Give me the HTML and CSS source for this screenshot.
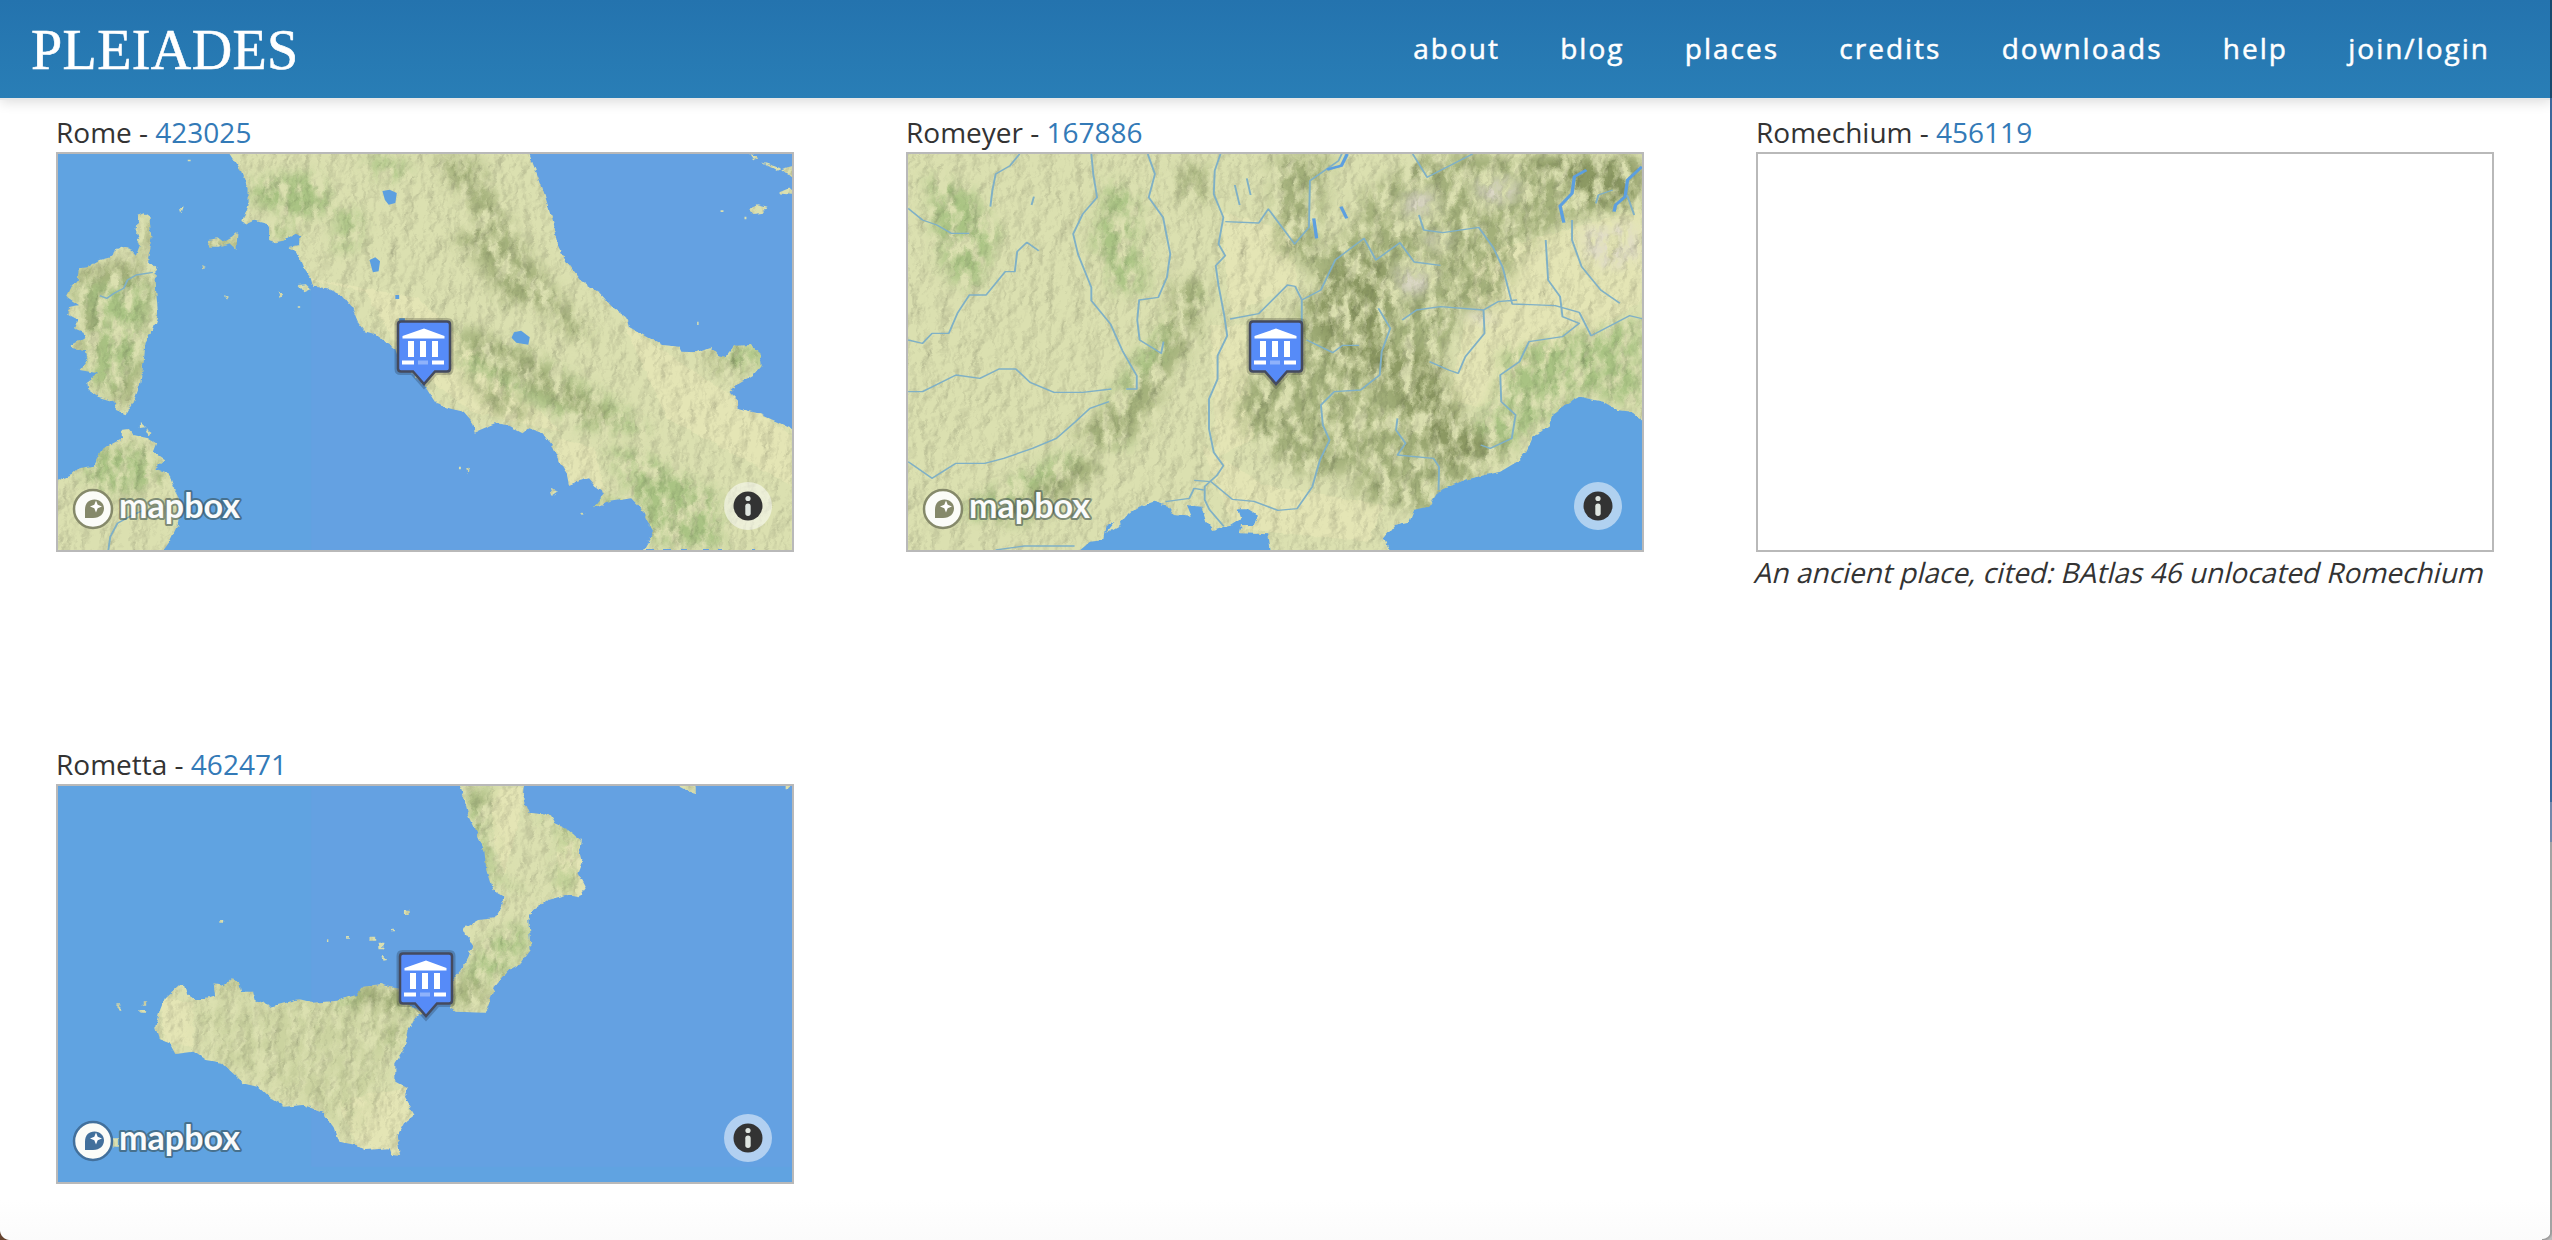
FILE: index.html
```html
<!DOCTYPE html>
<html lang="en">
<head>
<meta charset="utf-8">
<title>Pleiades</title>
<link rel="stylesheet" href="styles.css">
</head>
<body>
<svg class="defs" width="0" height="0" aria-hidden="true">
  <defs>
    <filter id="relief" x="0" y="0" width="100%" height="100%" color-interpolation-filters="sRGB">
      <feTurbulence type="fractalNoise" baseFrequency="0.032 0.016" numOctaves="5" seed="4" result="n"/>
      <feColorMatrix in="n" type="matrix" values="0 0 0 0 0  0 0 0 0 0  0 0 0 0 0  1 0 0 0 0" result="h"/>
      <feDiffuseLighting in="h" surfaceScale="2.4" diffuseConstant="1.18" lighting-color="#fff" result="lit"><feDistantLight azimuth="215" elevation="58"/></feDiffuseLighting>
      <feBlend in="SourceGraphic" in2="lit" mode="multiply" result="b"/>
      <feComposite in="b" in2="SourceGraphic" operator="in"/>
    </filter>
    <filter id="ridge" x="-20%" y="-20%" width="140%" height="140%" color-interpolation-filters="sRGB">
      <feGaussianBlur in="SourceGraphic" stdDeviation="18" result="soft"/>
      <feTurbulence type="fractalNoise" baseFrequency="0.04 0.015" numOctaves="5" seed="9" result="n"/>
      <feColorMatrix in="n" type="matrix" values="0 0 0 0 0  0 0 0 0 0  0 0 0 0 0  3 0 0 0 -0.9" result="m"/>
      <feComposite in="soft" in2="m" operator="in"/>
    </filter>
    <filter id="rough" x="-2%" y="-2%" width="104%" height="104%">
      <feTurbulence type="fractalNoise" baseFrequency="0.05" numOctaves="3" seed="2" result="n"/>
      <feDisplacementMap in="SourceGraphic" in2="n" scale="12" xChannelSelector="R" yChannelSelector="G"/>
    </filter>
    <symbol id="pin" viewBox="0 0 60 74">
      <path d="M6.500 5h47q3 0 3 3v45q0 3-3 3H41.500L30 69 18.500 56H6.500q-3 0-3-3V8q0-3 3-3z" class="pin-halo"/>
      <path d="M7 5.500h46q3 0 3 3v44q0 3-3 3H41L30 68 19 55.500H7q-3 0-3-3v-44q0-3 3-3z" class="pin-body"/>
      <path d="M8.500 22.500V20L30 12.500 50.500 20v2.500zM14 25h6v16h-6zm12 0h6v16h-6zm12 0h6v16h-6zM8 44.500h12v4H8zm30 0h12v4H38z" class="pin-glyph"/>
      <path d="M24 44.500h10v4H24z" class="pin-step"/>
    </symbol>
    <symbol id="logo" viewBox="0 0 176 48">
      <circle cx="21" cy="23" r="19" class="logo-disc"/>
      <path d="M13 32V23.500C13 17 17 13.500 22.500 13.500S32 17.500 32 22.500 28 32 21 32z" class="logo-drop"/>
      <path d="M24 14.500l1.700 4.300 4.300 1.700-4.300 1.700-1.700 4.300-1.700-4.300-4.300-1.700 4.300-1.700z" class="logo-star"/>
      <text x="47" y="32" textLength="121" lengthAdjust="spacingAndGlyphs" class="logo-word">mapbox</text>
    </symbol>
    <symbol id="info" viewBox="0 0 48 48">
      <circle cx="24" cy="24" r="24" class="info-ring"/>
      <circle cx="24" cy="24" r="14.500" class="info-disc"/>
      <circle cx="24" cy="16.500" r="2.600" class="info-mark"/>
      <rect x="21.300" y="21.500" width="5.400" height="12.500" rx="2.700" class="info-mark"/>
    </symbol>
  </defs>
</svg>

<header class="bar">
  <a class="brand">PLEIADES</a>
  <nav class="nav">
    <a>about</a><a>blog</a><a>places</a><a>credits</a><a>downloads</a><a>help</a><a>join/login</a>
  </nav>
</header>

<main class="grid">
  <section class="place">
    <h2>Rome - <a>423025</a></h2>
    <div class="map">
      <svg class="tiles" viewBox="16.700 27 1534.600 1188" preserveAspectRatio="none">
        <defs><clipPath id="land1">
          <path d="M372 20L400 80 413 130V180L402 228 412 236 430 224 450 232 458 250V285L470 292 485 288 500 275 512 266 523 275V300L500 305 515 320 530 370 545 400 550 425 580 430 610 450 632 490 645 535 660 562 680 570 700 590 722 612 730 650 782 720 808 778 840 792 865 800 880 825 888 860 905 850 930 835 955 840 988 865 1000 850 1030 865 1050 905 1065 950 1080 985 1085 1020 1105 1008 1125 1000 1140 1025 1160 1045 1135 1090 1170 1070 1215 1060 1235 1090 1250 1130 1262 1165 1250 1190 1240 1215H1560V858L1520 830 1480 805 1440 790 1437 765 1420 742 1440 715 1470 690 1488 660 1485 625 1465 600 1430 602 1412 635 1395 630 1380 605 1350 622 1320 620 1315 605 1280 600 1250 578 1210 545 1205 515 1175 485 1150 445 1110 405 1075 340 1060 290 1045 200 1030 130 1000 20Z"/>
          <path d="M185 212L198 205 208 215 212 280 203 340 220 365 222 440 226 510 215 555 200 590 196 650 188 720 175 770 160 808 140 795 135 770 100 755 80 735 78 710 100 685 62 675 78 645 75 615 50 610 45 600 72 580 68 560 50 550 58 525 38 510 40 485 60 480 35 455 45 425 58 405 60 370 80 365 105 345 130 335 135 315 150 305 170 315 180 330 188 300 180 265Z"/>
          <path d="M10 1010L45 990 60 970 90 962 105 920 130 895 150 880 150 855 165 852 175 870 205 880 222 895 215 920 240 945 220 970 248 985 262 1040 275 1075 270 1130 250 1190 235 1220H10Z"/>
          <path d="M330 285L350 280 360 290 380 275 392 260 390 315 375 295 350 305 333 305ZM518 420L535 418 545 432 530 442ZM1462 190L1480 178 1500 185 1490 203 1470 207ZM1488 52L1525 68 1560 110V60L1535 70 1520 78ZM1462 30L1483 40 1470 46ZM1520 145L1545 130 1560 150ZM1045 1032L1062 1040 1050 1052ZM272 190L280 182 274 208ZM318 360L328 366 320 370ZM364 450L372 455 368 464ZM476 438L486 450 480 460ZM870 970L876 968 873 988ZM1110 1103L1122 1105 1114 1110ZM190 830L200 850 190 852ZM200 850L212 860 208 875Z"/>
        </clipPath></defs>
        <path class="sea" d="M0 0H1600V1240H0z"/>
        <path class="sea-alt" d="M546 0H1600V1240H546z"/>
        <g filter="url(#rough)"><g clip-path="url(#land1)">
          <g filter="url(#relief)">
            <path class="land" d="M0 0H1600V1240H0z"/>
            <g class="plain"><path d="M330 340l330 100 80 200 140 160 190 60-300-400z"/><path d="M1200 540l350 330v150l-260-200z"/><path d="M1060 880l80 30 20 130-100-20z"/></g>
            <g filter="url(#ridge)">
              <path class="wood" d="M420 100l130-20 50 110-90 40-90-60zM600 180l50 20-10 110-40 20zM660 40l70-10 20 60-60 20zM450 240h60v50h-60zM860 540l120 60 130 110 110 100 30 60-140-20-140-110-120-80zM1160 900l100 40 140 110 10 160-140-10-60-160zM1110 1060h100v40h-100z"/>
              <path class="mount" d="M800 30l90 10 60 170 50 110 50 110 80 140-30 20-90-120-60 20-50-130-60-80 60-40z"/>
              <path class="mount" d="M870 540l130 80 180 190-20 40-160-120-140-120zM860 680l100 60 60 100-90-30z"/>
              <path class="mount" d="M190 200h20v130h-22zM50 380l130-40 40 60-20 260-30 130-80-60-20-140z"/>
              <path class="mount" d="M40 390l170 10-10 230-40 120-80-50zM90 910l100-20 60 130-130 40zM330 270h70v50h-70zM1380 610h100v60l-90 30z"/>
              <path class="wood" d="M60 420l150-10-20 220-60 120-50-50 20-160zM60 920l140-20 30 130-150 20zM1420 600h70v70h-70z"/>
            </g>
          </g>
        </g></g>
        <path class="water" d="M695 138l15-4 15 10-3 30-14 5-8-15zM668 345l12-8 10 12-3 30-12 3zM970 562l15-5 18 20-3 22-25-6-10-15zM722 450h8v12h-8zM730 520h12v12h-12z"/>
        <path class="river" d="M215 382l-35 8-18 15-8 25-20 15-15 15-15-8M122 1215l4-40 15-40 25-20 30-20"/>
        <path class="land" d="M288 44h6v5h-6zM1402 196h6v5h-6zM1452 215h4v8h-4zM1353 530h3v10h-3zM518 484h5v4h-5zM855 965h4v8h-4z"/>
      </svg>
      <svg class="pin pin-west"><use href="#pin"/></svg>
      <svg class="logo logo-land"><use href="#logo"/></svg>
      <svg class="info"><use href="#info"/></svg>
    </div>
  </section>

  <section class="place">
    <h2>Romeyer - <a>167886</a></h2>
    <div class="map">
      <svg class="tiles" viewBox="16.700 27 1534.600 1188" preserveAspectRatio="none">
        <defs><clipPath id="land2">
          <path d="M0 0H1600V830L1551 825 1530 800 1500 795 1470 770 1420 755 1390 780 1365 805 1355 850 1325 870 1310 920 1290 950 1255 980 1180 1005 1125 1040 1105 1085 1075 1095 1065 1130 1035 1140 1012 1180 1025 1220H775L770 1168 710 1165 715 1140 740 1140 748 1110 725 1090 705 1090 712 1120 690 1140 655 1155 640 1130 630 1085 600 1080 610 1115 570 1110 555 1080 530 1070 500 1085 480 1105 460 1140 430 1165 450 1130 430 1140 425 1185 395 1190 370 1220H0Z"/>
        </clipPath></defs>
        <path class="sea" d="M0 0H1600V1240H0z"/>
        <g filter="url(#rough)"><g clip-path="url(#land2)">
          <g filter="url(#relief)">
            <path class="land" d="M0 0H1600V1240H0z"/>
            <g class="plain"><path d="M1200 330l350-140v280l-150 130-190 190-60-30 20-150z"/><path d="M670 200l150 60 10 160-140 90z"/><path d="M650 540h70l20 340-80 60z"/><path d="M630 900l130 120 250 60-30 110-280-40z"/></g>
            <g filter="url(#ridge)">
              <path class="wood" d="M60 80l90 60 60 130-50 170-60-40-30-140zM440 90l50 60 30 280-60 30-60-180zM490 640l120-220 40 20-70 230-110 250-80-50zM1260 620l290-100v270l-120-50-130 140-110 160-120-20 180-260zM100 1110l250-200 80 60-170 170z"/>
              <path class="mount" d="M780 30h120l-30 300 60-70 150-230h470v160l-150 30-110 110-40 150-90 30-60 240 100 100 70 60-70 110-170 10-240-160 20-280 60-210-80-60z"/>
              <path class="mount" d="M960 150l180-120h300l-90 120-160 160-40 160 20 80-100 200 70 140 80 60-70 170-200-60 40-390z"/>
              <path class="mount" d="M720 680l160 20 50 300-120-20-110-160zM360 860l100-100 90-120 20-220 70-40-20 200-130 300-80 40zM180 1130l200-200 50 40-140 150zM580 60h60v120h-50z"/>
              <path class="shade" d="M1290 40h260v130l-110 10-80-90zM850 480l100-160 80 50-20 210 10 150-110-80zM1010 620h110l50 180 70 110-100 60-90-180z"/>
            </g>
            <g filter="url(#ridge)"><path class="snow" d="M1200 100h90v60l-70 30zM1050 160l60-40 10 90-60 30zM1040 360l80 10-20 70-60 20zM1430 250l100-10 10 110-90 20zM1180 500h50v60zM1090 270l60-10-20 70zM1060 350l60 20-30 60z"/></g>
          </g>
        </g></g>
        <g class="river">
          <path d="M17 190l30 35 30 15 30 25h38M250 27l-20 35-30 25-7 50-4 48M400 27l4 60 8 70-30 50-20 60 10 60 28 100v40l40 70 25 80 30 75v40h-22M518 27l15 60-13 70 30 60 15 110-7 70-18 60-40 8-4 60 5 60 45 40 5-35"/>
          <path d="M670 27l-12 50-2 70 20 70-10 80 14 35-20 30 6 60 12 90 6 60-20 60v70l-18 60v90l10 70 20 40-14 30-25 32v40l10 30 30 50M680 230l70 4 20-42 55 105 30-50 2-140 60-60 13-40M690 522l60-16 60-86 16 4 14 40v70M840 465l40-30 30-90 60-65 25 65 50-52 30 58 55 10M850 585l55 38 20-22h35M1000 490l25 60-18 70-4 70-40 45-55 5-28 40 4 60 14 45-20 60-16 80-32 66-40 5-50-27-45-6-45-53-35-4"/>
          <path d="M1072 27l30 70 95-70M1085 210l10 45 40 8 75-16 30 60 20 60 20 110 90 5 50 20 25 70 80-60 60 20M1405 225v60l20 80 40 70 40 40M1350 285l5 120 25 50 5 60 35 20-35 40-70 15-20 60-40 40 2 80 30 40-8 70-45 30-20-10M1290 465l-40 5-30 25 2 70-40 70-15 50-20-10-40-25M1220 495l-90-10-50 10-30 30M1040 820l-3 35 20 40-17 35 75 10 12 25-1 70"/>
          <path d="M17 585l30 10 20-30h35l18-60 25-55h35l40-70h20l5-60 20-28 25 25M17 740h30l70-50 50 10 40-28h35l30 40 50 30h60l60-10M17 950l50 50 50-45h60l40-15 60-30 50-30 40-50 30-40 40-20M280 155l-5 25M200 1215l60-12h105M555 1070l50-10 10-30 20 5"/>
        </g>
        <path class="lake" d="M935 27l-12 35-30 12M922 185l12 35M865 220l6 60M1435 75l-25 20-5 50-25 38 8 50M1551 65l-30 40-5 50-20 25-3 20"/>
        <path class="river" d="M1490 135l-30 15-5 25M1520 150l15 60M700 120l10 60M725 100l8 50"/>
      </svg>
      <svg class="pin"><use href="#pin"/></svg>
      <svg class="logo logo-land"><use href="#logo"/></svg>
      <svg class="info"><use href="#info"/></svg>
    </div>
  </section>

  <section class="place">
    <h2>Romechium - <a>456119</a></h2>
    <div class="map map-empty"></div>
    <p>An ancient place, cited: BAtlas 46 unlocated Romechium</p>
  </section>

  <section class="place">
    <h2>Rometta - <a>462471</a></h2>
    <div class="map">
      <svg class="tiles" viewBox="16.700 138 1534.600 1188" preserveAspectRatio="none">
        <defs><clipPath id="land4">
          <path d="M855 130L865 170 875 230 890 275 908 330 912 390 925 450 948 470 945 500 930 535 895 540 865 565 872 590 885 610 875 650 860 690 840 730 835 800 850 815 910 818 920 780 930 740 960 690 985 670 1005 630 1000 540 1010 510 1040 480 1080 465 1105 472 1120 440 1105 400 1113 370 1108 340 1112 300 1085 270 1055 250 1045 225 1000 218 990 180 993 130Z"/>
          <path d="M272 732L280 735 285 760 305 780 325 775 345 765 342 730 365 735 382 715 395 725 400 755 425 755 430 780 460 800 500 785 520 778 550 788 600 782 640 765 655 740 690 732 710 740 735 748 740 790 785 820 765 830 750 870 740 930 722 970V1025L748 1045 740 1070 750 1095 762 1125 740 1150 725 1190 732 1248 715 1245 710 1225 660 1230 640 1215 605 1205 595 1165 570 1115 530 1095 490 1100 460 1075 435 1040 405 1030 375 990 360 968 325 960 300 935 262 942 250 910 228 898 220 860 230 810 240 775Z"/>
          <path d="M1308 136H1350V160L1330 152ZM1538 136h10v12h-10zM740 512h12v10h-12zM668 590h14v12h-14zM687 608h10v20h-8zM695 645l10 15-8 2zM619 588h6v8h-6zM579 598h5v8h-5zM354 540h8v8h-8zM141 793h6v16h-6zM187 810h14v8h-14zM196 787h5v10h-5zM715 566h4v8h-4zM130 1195h14v25h-14z"/>
        </clipPath></defs>
        <path class="sea" d="M0 100H1600V1340H0z"/>
        <path class="sea-alt" d="M546 100H1600V1280H546z"/>
        <g filter="url(#rough)"><g clip-path="url(#land4)">
          <g filter="url(#relief)">
            <path class="land" d="M0 0H1600V1340H0z"/>
            <g class="plain"><path d="M1060 270l60 20v190l-60-10zM920 150l70-10-10 110-30 150-20-80zM230 770l70 20v130l-60-10zM600 1080l150-40v200h-100z"/></g>
            <g filter="url(#ridge)">
              <path class="wood" d="M860 150l60-10-10 120 30 170 120 30 10-180-70-80 100 50-10 210-170-20-50-200zM960 550l50 20-30 90-130 150-20-30 80-170zM600 740l160 20v60l-180 40zM700 860h40v60h-40z"/>
              <path class="mount" d="M860 150l50 10 10 120-20-60zM840 790l20-80 50 10v80zM640 730l110 20-10 80-110-10zM360 720h40v50h-40zM370 880l70-20 20 90-80-20zM500 790h60v80h-50zM700 850l30 10v60l-30-20z"/>
              <path class="faint" d="M300 800l400 0v200l-60 180-180-150-120-80z"/>
            </g>
          </g>
        </g></g>
      </svg>
      <svg class="pin"><use href="#pin"/></svg>
      <svg class="logo logo-sea"><use href="#logo"/></svg>
      <svg class="info"><use href="#info"/></svg>
    </div>
  </section>
</main>
<div class="edge"></div>
<div class="corner corner-left"></div>
<div class="corner corner-right"></div>
</body>
</html>
```
FILE: styles.css
```css
* { box-sizing: border-box; }
html, body { margin: 0; }
body {
  position: relative;
  height: 1240px;
  overflow: hidden;
  background: linear-gradient(#fff 1200px, #fbfbfb 1240px);
  color: #333;
  font: 28px/40px "Open Sans", "Noto Sans", sans-serif;
}
.defs { position: absolute; }

.bar {
  display: flex;
  justify-content: space-between;
  align-items: center;
  height: 98px;
  padding: 0 62px 0 31px;
  background: linear-gradient(#2473ae, #297eb6);
  box-shadow: 0 2px 0 #e7e7e7, 0 4px 12px rgba(0, 0, 0, .14);
  color: #fff;
}
.brand {
  padding-top: 3px;
  font: 56px/95px "Liberation Serif", serif;
  letter-spacing: .4px;
  -webkit-text-stroke: .6px #fff;
}
.nav {
  display: flex;
  gap: 60.3px;
  padding-bottom: 2px;
  letter-spacing: 2px;
  -webkit-text-stroke: .5px #fff;
}

.grid {
  display: grid;
  grid-template-columns: repeat(3, 738px);
  grid-template-rows: 632px auto;
  column-gap: 112px;
  padding: 14px 56px 0;
}
.place h2 { margin: 0; font: inherit; }
.place h2 a { color: #337ab7; }
.place p {
  width: max-content;
  margin: 0;
  transform: skewX(-14deg);
  white-space: nowrap;
}

.map {
  position: relative;
  height: 400px;
  border: 2px solid #b9b9b9;
  overflow: hidden;
  background: #62a2e1;
}
.map-empty { background: #fff; }
.tiles { display: block; width: 734px; height: 396px; }

.sea { fill: #60a3e1; }
.sea-alt { fill: #64a1e2; }
.land { fill: #dbe0b0; }
.plain { fill: #e4e5b5; }
.wood { fill: #a9c383; }
.mount { fill: #a3b07a; }
.shade { fill: #8c9963; }
.faint { fill: #cbd3a0; }
.snow { fill: #dfdacb; }
.water { fill: #5c9fe0; }
.river { fill: none; stroke: #7fb0c6; stroke-width: 4; stroke-linejoin: round; }
.lake { fill: none; stroke: #5c9fe0; stroke-width: 7; stroke-linejoin: round; }

.pin { position: absolute; left: 338px; top: 162px; width: 60px; height: 74px; }
.pin-west { left: 336px; }
.pin-halo { fill: none; stroke: rgba(0, 0, 0, .2); stroke-width: 6; }
.pin-body { fill: #568bf8; stroke: #444a5e; stroke-width: 2.500; }
.pin-glyph { fill: #fff; }
.pin-step { fill: #8fb2fb; }

.logo { position: absolute; left: 14px; top: 332px; width: 176px; height: 48px; color: #85896a; }
.logo-sea { color: #42709c; }
.logo-disc { fill: #fbfcf8; stroke: currentColor; stroke-width: 2.500; }
.logo-drop { fill: currentColor; }
.logo-star { fill: #fff; }
.logo-word {
  font: bold 34px Lato, sans-serif;
  fill: #fafbfb;
  stroke: rgba(50, 70, 70, .55);
  stroke-width: 4;
  stroke-linejoin: round;
  paint-order: stroke;
}

.info { position: absolute; left: 666px; top: 328px; width: 48px; height: 48px; }
.info-ring { fill: rgba(255, 255, 255, .5); }
.info-disc { fill: #333; }
.info-mark { fill: #dfe5e0; }

.edge {
  position: absolute;
  top: 0;
  right: 0;
  width: 2px;
  height: 1240px;
  background: linear-gradient(#17496e 98px, #3b689b 98px 802px, #7388ab 802px 842px, #a3a3a3 842px);
}
.corner { position: absolute; bottom: 0; width: 10px; height: 10px; }
.corner-left { left: 0; background: radial-gradient(circle at 100% 0, transparent 9.500px, #65432f 10.500px); }
.corner-right { right: 0; background: radial-gradient(circle at 0 0, transparent 8.500px, #999 9.500px, #bbb 12px); }
```
